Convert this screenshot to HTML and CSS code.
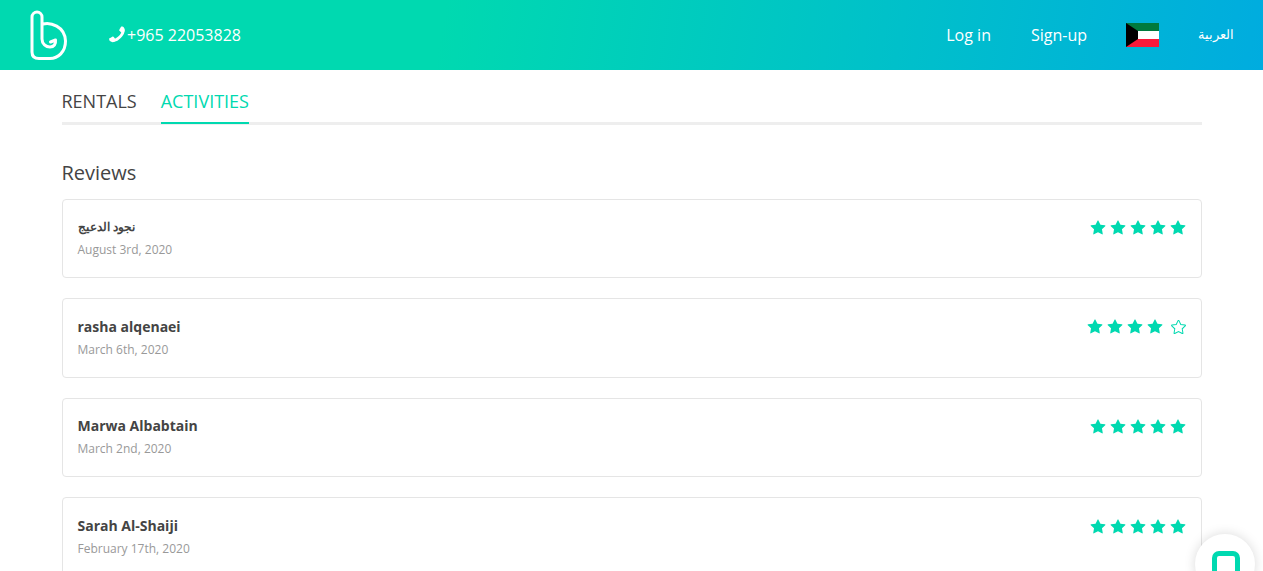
FILE: index.html
```html
<!DOCTYPE html>
<html lang="en">
<head>
  <meta charset="UTF-8">
  <meta name="viewport" content="width=device-width, initial-scale=1.0">
  <title>Reviews</title>
  <link rel="stylesheet" href="styles.css">
</head>
<body>
  <svg class="sprites" width="0" height="0">
    <symbol id="star" viewBox="0 0 1792 1792">
      <path d="M1728 647q0 22-26 48l-363 354 86 500q1 7 1 20 0 21-10.5 35.5t-30.5 14.5q-19 0-40-12l-449-236-449 236q-22 12-40 12-21 0-31.5-14.5t-10.5-35.5q0-6 2-20l86-500-364-354q-25-27-25-48 0-37 56-46l502-73 225-455q19-41 49-41t49 41l225 455 502 73q56 9 56 46z"/>
    </symbol>
  </svg>

  <header class="topbar">
    <div class="topbar-left">
      <svg class="logo" viewBox="0 0 38 50" width="38" height="50">
        <path d="M13 14C20 12 35 16 35.500 31C35.500 42 28 48.500 20 48.500H9C4.500 48.500 2 46 2 42V7A5 5 0 0 1 12 7V29C12 34 16 37 20 37C24 37 26 34 25.500 30L20.500 32" fill="none" stroke="#fff" stroke-width="3" stroke-linecap="round" stroke-linejoin="round"/>
      </svg>
      <a class="phone" href="#">
        <svg class="phone-icon" viewBox="0 0 1408 1792" width="16" height="20"><path fill="#fff" d="M1408 1240q0 27-10 70.500t-21 68.500q-21 50-122 106-94 51-186 51-27 0-53-3.500t-57.500-12.500-47-14.500-55.500-20.500-49-18q-98-35-175-83-127-79-264-216t-216-264q-48-77-83-175-3-9-18-49t-20.500-55.500-14.500-47-12.500-57.500-3.500-53q0-92 51-186 56-101 106-122 25-11 68.500-21t70.500-10q14 0 21 3 18 6 53 76 11 19 30 54t35 63.500 31 53.500q3 4 17.500 25t21.500 35.500 7 28.500q0 20-28.500 50t-62 55-62 53-28.500 46q0 9 5 22.500t8.500 20.500 14 24 11.500 19q76 137 174 235t235 174q2 1 19 11.500t24 14 20.500 8.500 22.500 5q18 0 46-28.500t53-62 55-62 50-28.500q14 0 28.500 7t35.500 21.500 25 17.500q25 15 53.500 31t63.500 35 54 30q70 35 76 53 3 7 3 21z"/></svg>
        <span>+965 22053828</span>
      </a>
    </div>
    <nav class="topbar-right">
      <a href="#">Log in</a>
      <a class="signup" href="#">Sign-up</a>
      <svg class="flag" viewBox="0 0 33 24" width="33" height="24">
        <rect width="33" height="8" fill="#007a3d"/>
        <rect y="8" width="33" height="8" fill="#fff"/>
        <rect y="16" width="33" height="8" fill="#f9193a"/>
        <polygon points="0,0 12,8 12,16 0,24" fill="#000"/>
      </svg>
      <a class="lang" href="#" lang="ar">العربية</a>
    </nav>
  </header>

  <main class="container">
    <div class="tabs">
      <a class="tab" href="#">RENTALS</a>
      <a class="tab active" href="#">ACTIVITIES</a>
    </div>

    <h2 class="section-title">Reviews</h2>

    <div class="review">
      <div>
        <div class="review-name arabic" lang="ar">نجود الدعيج</div>
        <div class="review-date">August 3rd, 2020</div>
      </div>
      <div class="stars">
        <svg><use href="#star"/></svg><svg><use href="#star"/></svg><svg><use href="#star"/></svg><svg><use href="#star"/></svg><svg><use href="#star"/></svg>
      </div>
    </div>

    <div class="review">
      <div>
        <div class="review-name">rasha alqenaei</div>
        <div class="review-date">March 6th, 2020</div>
      </div>
      <div class="stars">
        <svg><use href="#star"/></svg><svg><use href="#star"/></svg><svg><use href="#star"/></svg><svg><use href="#star"/></svg><svg class="empty"><use href="#star"/></svg>
      </div>
    </div>

    <div class="review">
      <div>
        <div class="review-name">Marwa Albabtain</div>
        <div class="review-date">March 2nd, 2020</div>
      </div>
      <div class="stars">
        <svg><use href="#star"/></svg><svg><use href="#star"/></svg><svg><use href="#star"/></svg><svg><use href="#star"/></svg><svg><use href="#star"/></svg>
      </div>
    </div>

    <div class="review">
      <div>
        <div class="review-name">Sarah Al-Shaiji</div>
        <div class="review-date">February 17th, 2020</div>
      </div>
      <div class="stars">
        <svg><use href="#star"/></svg><svg><use href="#star"/></svg><svg><use href="#star"/></svg><svg><use href="#star"/></svg><svg><use href="#star"/></svg>
      </div>
    </div>
  </main>

  <div class="chat-button"><span class="chat-icon"></span></div>
</body>
</html>
```

FILE: styles.css
```css
html, body {
  height: 571px;
  overflow: hidden;
}
body {
  margin: 0;
  font-family: "Open Sans", sans-serif;
  color: #444;
  background: #fff;
}
a {
  color: inherit;
  text-decoration: none;
}
.sprites {
  display: block;
  height: 0;
}
.topbar {
  height: 70px;
  display: flex;
  align-items: center;
  justify-content: space-between;
  background: linear-gradient(100deg, #00d9b0 35%, #00acdf 100%);
  color: #fff;
}
.topbar-left {
  display: flex;
  align-items: center;
  padding-left: 30px;
}
.logo {
  display: block;
}
.phone {
  display: flex;
  align-items: center;
  gap: 2px;
  margin-left: 41px;
  font-size: 16px;
}
.phone-icon {
  transform: scaleX(-1);
}
.topbar-right {
  display: flex;
  align-items: center;
  padding-right: 29px;
  font-size: 16px;
}
.topbar-right a {
  margin-right: 40px;
}
.topbar-right .signup {
  margin-right: 39px;
}
.topbar-right .lang {
  margin-right: 0;
  font-size: 13px;
  margin-top: -2px;
}
.flag {
  display: block;
  margin-right: 39px;
  margin-top: -1px;
}
.container {
  width: 1140px;
  margin: 0 auto;
}
.tabs {
  display: flex;
  gap: 24px;
  height: 52px;
  border-bottom: 3px solid #eee;
}
.tab {
  font-size: 18px;
  line-height: 24px;
  padding-top: 19px;
  height: 33px;
}
.tab.active {
  color: #00d9b0;
  border-bottom: 2px solid #00d9b0;
}
.section-title {
  margin: 34px 0 12.600px;
  font-size: 20px;
  line-height: 27px;
  font-weight: 400;
}
.review {
  display: flex;
  justify-content: space-between;
  box-sizing: border-box;
  height: 79.600px;
  margin-bottom: 20px;
  padding: 16.700px 15px;
  border: 1px solid #e5e5e5;
  border-radius: 4px;
}
.review-name {
  font-size: 14px;
  line-height: 22px;
  font-weight: 700;
}
.review-name.arabic {
  font-size: 12px;
}
.review-date {
  font-size: 12px;
  line-height: 20px;
  color: #999;
  margin-top: 2px;
}
.stars {
  display: flex;
  gap: 3.800px;
  height: 23px;
  align-items: center;
}
.stars svg {
  width: 16px;
  height: 16px;
  fill: #00d9b0;
}
.stars svg.empty {
  fill: none;
  stroke: #00d9b0;
  stroke-width: 120;
  margin-left: 4px;
  width: 15px;
  height: 15px;
}
.chat-button {
  position: fixed;
  right: 8px;
  top: 534px;
  width: 60px;
  height: 60px;
  border-radius: 50%;
  background: #fff;
  box-shadow: 0 0 12px rgba(0, 0, 0, 0.15);
}
.chat-icon {
  position: absolute;
  left: 17px;
  top: 17px;
  width: 18px;
  height: 24px;
  border: 5px solid #00d9b0;
  border-radius: 7px;
}
```
